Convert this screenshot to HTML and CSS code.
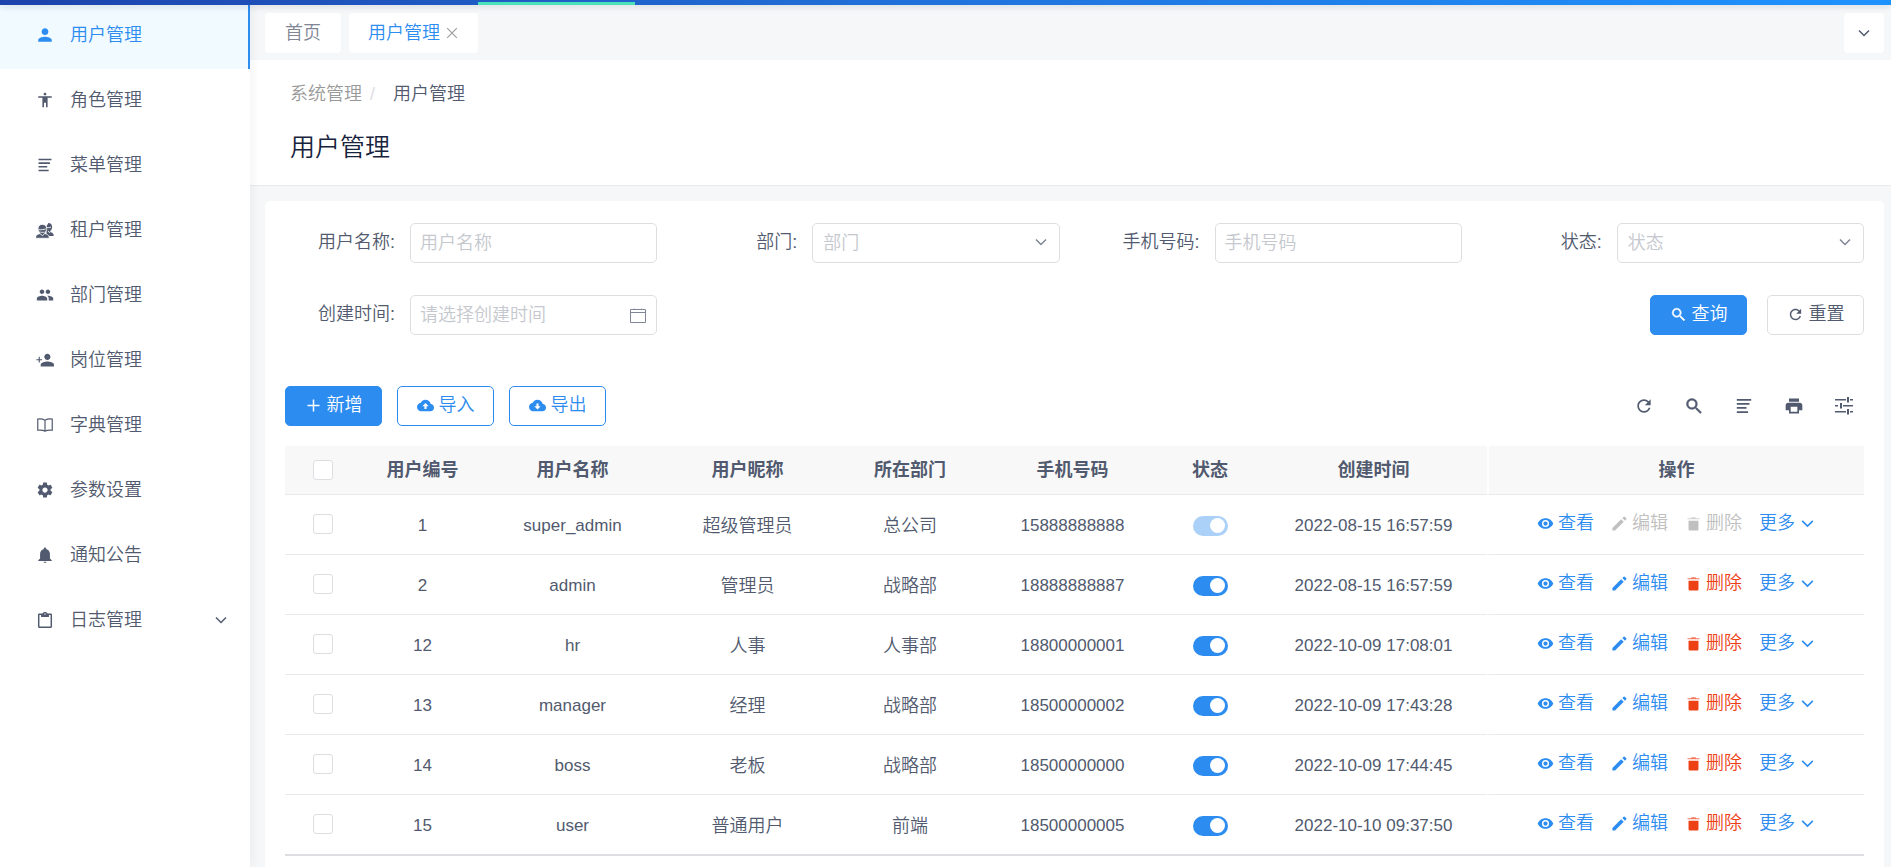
FILE: index.html
```html
<!DOCTYPE html>
<html lang="zh-CN">
<head>
<meta charset="utf-8">
<title>用户管理</title>
<link rel="stylesheet" href="styles.css">
</head>
<body>
<svg class="sprite" aria-hidden="true">
  <symbol id="i-person" viewBox="0 0 512 512"><path d="M256 256c52.800 0 96-43.200 96-96s-43.200-96-96-96-96 43.200-96 96 43.200 96 96 96zm0 48c-63.800 0-192 32.200-192 96v48h384v-48c0-63.800-128.200-96-192-96z"/></symbol>
  <symbol id="i-body" viewBox="0 0 512 512"><path d="M256 48c22 0 40 18 40 40s-18 40-40 40-40-18-40-40 18-40 40-40zm192 144H330v272h-46V336h-56v128h-46V192H64v-44h384z"/></symbol>
  <symbol id="i-lines" viewBox="0 0 512 512"><path d="M72 76h368v44H72zM72 180h324v44H72zM72 284h248v44H72zM72 388h288v44H72z"/></symbol>
  <symbol id="i-contacts" viewBox="0 0 24 24"><path d="M16.500 2.500c3 0 5 2 5 5 0 2.500-1 4.500-2.300 5.600v1.400c2 .800 4.300 1.800 4.300 4V20H14V7z"/><path fill="none" stroke="#fff" stroke-width="1.200" d="M13.500 8.500c1.500.600 4.500.600 6.500-.500M16 13l2 2.500 1.500-1.500"/><path stroke="#fff" stroke-width="1" d="M8.500 4.500c3.500 0 5.700 2.200 5.700 5.500 0 2.300-1 4.300-2.500 5.500v1.200c2.500.900 5.800 2 5.800 4.500v1.800h-18v-1.800c0-2.500 3.300-3.600 5.800-4.500v-1.200C3.800 14.300 2.800 12.300 2.800 10c0-3.300 2.200-5.500 5.700-5.500z"/><path fill="none" stroke="#fff" stroke-width="1.200" d="M4 11.500c3 .500 6 0 9-1M5.500 17l3 2.500 3-2.500M6 14.500c1.500 1 3.500 1 5 0"/></symbol>
  <symbol id="i-people" viewBox="0 0 512 512"><path d="M340 230c36 0 64-28 64-64s-28-64-64-64-64 28-64 64 28 64 64 64zm-170 0c36 0 64-28 64-64s-28-64-64-64-64 28-64 64 28 64 64 64zm0 44C118 274 24 300 24 354v58h294v-58c0-54-98-80-148-80zm176 0c-8 0-16 0-24 2 30 24 40 50 40 82v54h128v-58c0-54-96-80-144-80z"/></symbol>
  <symbol id="i-person-add" viewBox="0 0 512 512"><path d="M324 256c50 0 88-40 88-90s-38-90-88-90-88 40-88 90 38 90 88 90zm0 40c-64 0-190 32-190 94v48h378v-48c0-62-124-94-188-94zM108 232v-66H76v66H10v30h66v66h32v-66h66v-30z"/></symbol>
  <symbol id="i-book" viewBox="0 0 512 512"><path fill="none" stroke="currentColor" stroke-width="34" d="M256 120C200 86 120 78 50 88v318c70-10 150-6 206 24 56-30 136-34 206-24V88c-70-10-150-2-206 32zm0 0v310"/></symbol>
  <symbol id="i-gear" viewBox="0 0 24 24"><path d="M19.430 12.980c.040-.320.070-.640.070-.980s-.030-.660-.070-.980l2.110-1.650c.190-.150.240-.420.120-.640l-2-3.460c-.120-.220-.390-.300-.610-.220l-2.490 1c-.520-.400-1.080-.730-1.690-.980l-.380-2.650C14.460 2.180 14.250 2 14 2h-4c-.250 0-.460.180-.490.420l-.380 2.650c-.610.250-1.170.590-1.690.980l-2.490-1c-.230-.090-.490 0-.610.220l-2 3.460c-.130.220-.070.490.120.640l2.110 1.650c-.040.320-.070.650-.070.980s.030.660.070.980l-2.110 1.650c-.190.150-.240.420-.120.640l2 3.460c.120.220.390.300.610.220l2.490-1c.520.400 1.080.730 1.690.980l.380 2.650c.030.240.240.420.490.420h4c.250 0 .460-.180.490-.420l.380-2.650c.610-.250 1.170-.590 1.690-.980l2.490 1c.230.090.490 0 .610-.220l2-3.460c.120-.220.070-.490-.120-.640l-2.110-1.650zM12 15.500c-1.930 0-3.500-1.570-3.500-3.500s1.570-3.500 3.500-3.500 3.500 1.570 3.500 3.500-1.570 3.500-3.500 3.500z"/></symbol>
  <symbol id="i-bell" viewBox="0 0 512 512"><path d="M256 480c22 0 40-12 40-34h-80c0 22 18 34 40 34zm140-124V228c0-72-42-124-108-140V74c0-20-14-34-32-34s-32 14-32 34v14c-66 16-108 68-108 140v128l-52 48v22h384v-22z"/></symbol>
  <symbol id="i-clipboard" viewBox="0 0 512 512"><path fill-rule="evenodd" d="M420 72h-92c-8-26-36-46-72-46s-64 20-72 46H92c-22 0-36 16-36 38v334c0 22 14 38 36 38h328c22 0 36-16 36-38V110c0-22-14-38-36-38zm-6 368H98V114h46v54h224v-54h46zM256 66c12 0 20 8 20 20s-8 20-20 20-20-8-20-20 8-20 20-20z"/></symbol>
  <symbol id="i-down" viewBox="0 0 16 16"><path fill="none" stroke="currentColor" stroke-width="1.500" d="m3 5.500 5 5 5-5"/></symbol>
  <symbol id="i-close" viewBox="0 0 16 16"><path fill="none" stroke="currentColor" stroke-width="1.200" d="m2.500 2.500 11 11m0-11-11 11"/></symbol>
  <symbol id="i-calendar" viewBox="0 0 16 16"><path fill="none" stroke="currentColor" d="M.500 2.500h15v13H.500zM.500 5.500h15"/><path fill="none" stroke="currentColor" stroke-opacity="0.400" d="M4.500 1v2M11.500 1v2"/></symbol>
  <symbol id="i-search" viewBox="0 0 24 24"><path stroke="currentColor" stroke-width="0.600" d="M15.500 14h-.790l-.280-.270A6.471 6.471 0 0 0 16 9.500 6.500 6.500 0 1 0 9.500 16c1.610 0 3.090-.590 4.230-1.570l.270.280v.790l5.500 5.500L21 19.500l-5.500-5.500zm-6 0C7.010 14 5 11.990 5 9.500S7.010 5 9.500 5 14 7.010 14 9.500 11.990 14 9.500 14z"/></symbol>
  <symbol id="i-refresh" viewBox="0 0 24 24"><path d="M17.650 6.350C16.200 4.900 14.210 4 12 4c-4.420 0-7.990 3.580-7.990 8s3.570 8 7.990 8c3.730 0 6.840-2.550 7.730-6h-2.080c-.820 2.330-3.040 4-5.650 4-3.310 0-6-2.690-6-6s2.690-6 6-6c1.660 0 3.140.690 4.220 1.780L13 11h7V4l-2.350 2.350z"/></symbol>
  <symbol id="i-add" viewBox="0 0 17 17"><path fill="none" stroke="currentColor" stroke-width="1.500" d="M8.500 2.500v12M2.500 8.500h12"/></symbol>
  <symbol id="i-cloud-up" viewBox="0 0 24 24"><path d="M19.350 10.040C18.670 6.590 15.640 4 12 4 9.110 4 6.600 5.640 5.350 8.040 2.340 8.360 0 10.910 0 14c0 3.310 2.690 6 6 6h13c2.760 0 5-2.240 5-5 0-2.640-2.050-4.780-4.650-4.960zM13.500 13v4h-3v-4H7.500l4.500-4.500 4.500 4.500h-3z"/></symbol>
  <symbol id="i-cloud-down" viewBox="0 0 24 24"><path d="M19.350 10.040C18.670 6.590 15.640 4 12 4 9.110 4 6.600 5.640 5.350 8.040 2.340 8.360 0 10.910 0 14c0 3.310 2.690 6 6 6h13c2.760 0 5-2.240 5-5 0-2.640-2.050-4.780-4.650-4.960zM16.500 13 12 17.500 7.500 13h3V9h3v4h3z"/></symbol>
  <symbol id="i-print" viewBox="0 0 24 24"><path d="M19 8H5c-1.660 0-3 1.340-3 3v6h4v4h12v-4h4v-6c0-1.660-1.340-3-3-3zm-3 11H8v-6h8v6zM18 3H6v4h12V3z"/></symbol>
  <symbol id="i-options" viewBox="0 0 20 20"><path d="M1 3h11v1.500H1zM16 3h3v1.500h-3zM13 1h2v5.500h-2zM1 9h3v1.500H1zM9 9h10v1.500H9zM6 7h2v5.500H6zM1 15h11v1.500H1zM16 15h3v1.500h-3zM13 13h2v5.500h-2z"/></symbol>
  <symbol id="i-eye" viewBox="0 0 24 24"><path d="M12 4.500C7 4.500 2.730 7.610 1 12c1.730 4.390 6 7.500 11 7.500s9.270-3.110 11-7.500c-1.730-4.390-6-7.500-11-7.500zm0 12.500a5 5 0 1 1 0-10 5 5 0 0 1 0 10zm0-8a3 3 0 1 0 0 6 3 3 0 0 0 0-6z"/></symbol>
  <symbol id="i-edit" viewBox="0 0 24 24"><path d="M2 18.300V22h3.700L18 9.700 14.300 6 2 18.300zM21.600 6.100a1 1 0 0 0 0-1.400l-2.300-2.300a1 1 0 0 0-1.400 0L16 4.300 19.700 8l1.900-1.900z"/></symbol>
  <symbol id="i-trash" viewBox="0 0 24 24"><path d="M5 8v12c0 1.100.900 2 2 2h10c1.100 0 2-.900 2-2V8z"/><path fill-opacity="0.700" d="M20.500 4.500H16L14.500 3h-5L8 4.500H3.500V6h17z"/></symbol>
</svg>

<div class="app">
  <div class="topbar"><span class="topbar-active"></span></div>
  <div class="layout">
    <nav class="sidebar" aria-label="系统管理">
      <a class="menu-item menu-item-active" href="#user"><svg class="icon"><use href="#i-person"/></svg><span>用户管理</span></a>
      <a class="menu-item" href="#role"><svg class="icon"><use href="#i-body"/></svg><span>角色管理</span></a>
      <a class="menu-item" href="#menu"><svg class="icon"><use href="#i-lines"/></svg><span>菜单管理</span></a>
      <a class="menu-item" href="#tenant"><svg class="icon"><use href="#i-contacts"/></svg><span>租户管理</span></a>
      <a class="menu-item" href="#dept"><svg class="icon"><use href="#i-people"/></svg><span>部门管理</span></a>
      <a class="menu-item" href="#post"><svg class="icon"><use href="#i-person-add"/></svg><span>岗位管理</span></a>
      <a class="menu-item" href="#dict"><svg class="icon"><use href="#i-book"/></svg><span>字典管理</span></a>
      <a class="menu-item" href="#config"><svg class="icon"><use href="#i-gear"/></svg><span>参数设置</span></a>
      <a class="menu-item" href="#notice"><svg class="icon"><use href="#i-bell"/></svg><span>通知公告</span></a>
      <a class="menu-item" href="#log"><svg class="icon"><use href="#i-clipboard"/></svg><span>日志管理</span><svg class="icon menu-arrow"><use href="#i-down"/></svg></a>
    </nav>

    <div class="page">
      <div class="tabs">
        <a class="tab" href="#home">首页</a>
        <div class="tab tab-active"><a href="#user">用户管理</a><button class="tab-close" type="button" aria-label="关闭"><svg class="icon"><use href="#i-close"/></svg></button></div>
        <button class="tabs-more" type="button" aria-label="更多标签"><svg class="icon"><use href="#i-down"/></svg></button>
      </div>

      <header class="page-head">
        <div class="crumbs"><a href="#system">系统管理</a><span class="crumb-sep">/</span><span>用户管理</span></div>
        <h1 class="page-title">用户管理</h1>
      </header>

      <main class="card">
        <form class="filters">
          <div class="field"><label for="f-name">用户名称:</label><input class="control" id="f-name" type="text" placeholder="用户名称"></div>
          <div class="field"><label for="f-dept">部门:</label><div class="control-box"><select class="control" id="f-dept"><option>部门</option></select><svg class="icon control-arrow"><use href="#i-down"/></svg></div></div>
          <div class="field"><label for="f-phone">手机号码:</label><input class="control" id="f-phone" type="text" placeholder="手机号码"></div>
          <div class="field"><label for="f-state">状态:</label><div class="control-box"><select class="control" id="f-state"><option>状态</option></select><svg class="icon control-arrow"><use href="#i-down"/></svg></div></div>
          <div class="field"><label for="f-time">创建时间:</label><div class="control-box"><input class="control" id="f-time" type="text" placeholder="请选择创建时间"><svg class="icon control-date"><use href="#i-calendar"/></svg></div></div>
          <div class="filter-actions">
            <button class="btn btn-primary" type="button"><svg class="icon"><use href="#i-search"/></svg>查询</button>
            <button class="btn" type="reset"><svg class="icon"><use href="#i-refresh"/></svg>重置</button>
          </div>
        </form>

        <div class="toolbar">
          <button class="btn btn-primary" type="button"><svg class="icon"><use href="#i-add"/></svg>新增</button>
          <button class="btn btn-outline" type="button"><svg class="icon"><use href="#i-cloud-up"/></svg>导入</button>
          <button class="btn btn-outline" type="button"><svg class="icon"><use href="#i-cloud-down"/></svg>导出</button>
          <div class="tools">
            <button class="tool" type="button" aria-label="刷新"><svg class="icon"><use href="#i-refresh"/></svg></button>
            <button class="tool" type="button" aria-label="搜索"><svg class="icon"><use href="#i-search"/></svg></button>
            <button class="tool" type="button" aria-label="密度"><svg class="icon"><use href="#i-lines"/></svg></button>
            <button class="tool" type="button" aria-label="打印"><svg class="icon"><use href="#i-print"/></svg></button>
            <button class="tool" type="button" aria-label="列设置"><svg class="icon"><use href="#i-options"/></svg></button>
          </div>
        </div>

        <table class="grid">
          <colgroup><col class="w-check"><col class="w-id"><col class="w-text"><col class="w-text"><col class="w-dept"><col class="w-text"><col class="w-state"><col><col class="w-ops"></colgroup>
          <thead>
            <tr><th><input class="check" type="checkbox" aria-label="全选"></th><th>用户编号</th><th>用户名称</th><th>用户昵称</th><th>所在部门</th><th>手机号码</th><th>状态</th><th>创建时间</th><th class="ops-col">操作</th></tr>
          </thead>
          <tbody>
            <tr>
              <td><input class="check" type="checkbox" aria-label="选择 super_admin"></td><td class="latin">1</td><td class="latin">super_admin</td><td>超级管理员</td><td>总公司</td><td class="latin">15888888888</td>
              <td><input class="switch" type="checkbox" role="switch" aria-label="状态" checked disabled></td><td class="latin">2022-08-15 16:57:59</td>
              <td class="ops-col"><div class="ops"><a class="op" href="#view"><svg class="icon"><use href="#i-eye"/></svg>查看</a><a class="op op-disabled" href="#edit" aria-disabled="true"><svg class="icon"><use href="#i-edit"/></svg>编辑</a><a class="op op-disabled" href="#del" aria-disabled="true"><svg class="icon"><use href="#i-trash"/></svg>删除</a><a class="op" href="#more">更多<svg class="icon"><use href="#i-down"/></svg></a></div></td>
            </tr>
            <tr>
              <td><input class="check" type="checkbox" aria-label="选择 admin"></td><td class="latin">2</td><td class="latin">admin</td><td>管理员</td><td>战略部</td><td class="latin">18888888887</td>
              <td><input class="switch" type="checkbox" role="switch" aria-label="状态" checked></td><td class="latin">2022-08-15 16:57:59</td>
              <td class="ops-col"><div class="ops"><a class="op" href="#view"><svg class="icon"><use href="#i-eye"/></svg>查看</a><a class="op" href="#edit"><svg class="icon"><use href="#i-edit"/></svg>编辑</a><a class="op op-danger" href="#del"><svg class="icon"><use href="#i-trash"/></svg>删除</a><a class="op" href="#more">更多<svg class="icon"><use href="#i-down"/></svg></a></div></td>
            </tr>
            <tr>
              <td><input class="check" type="checkbox" aria-label="选择 hr"></td><td class="latin">12</td><td class="latin">hr</td><td>人事</td><td>人事部</td><td class="latin">18800000001</td>
              <td><input class="switch" type="checkbox" role="switch" aria-label="状态" checked></td><td class="latin">2022-10-09 17:08:01</td>
              <td class="ops-col"><div class="ops"><a class="op" href="#view"><svg class="icon"><use href="#i-eye"/></svg>查看</a><a class="op" href="#edit"><svg class="icon"><use href="#i-edit"/></svg>编辑</a><a class="op op-danger" href="#del"><svg class="icon"><use href="#i-trash"/></svg>删除</a><a class="op" href="#more">更多<svg class="icon"><use href="#i-down"/></svg></a></div></td>
            </tr>
            <tr>
              <td><input class="check" type="checkbox" aria-label="选择 manager"></td><td class="latin">13</td><td class="latin">manager</td><td>经理</td><td>战略部</td><td class="latin">18500000002</td>
              <td><input class="switch" type="checkbox" role="switch" aria-label="状态" checked></td><td class="latin">2022-10-09 17:43:28</td>
              <td class="ops-col"><div class="ops"><a class="op" href="#view"><svg class="icon"><use href="#i-eye"/></svg>查看</a><a class="op" href="#edit"><svg class="icon"><use href="#i-edit"/></svg>编辑</a><a class="op op-danger" href="#del"><svg class="icon"><use href="#i-trash"/></svg>删除</a><a class="op" href="#more">更多<svg class="icon"><use href="#i-down"/></svg></a></div></td>
            </tr>
            <tr>
              <td><input class="check" type="checkbox" aria-label="选择 boss"></td><td class="latin">14</td><td class="latin">boss</td><td>老板</td><td>战略部</td><td class="latin">18500000000</td>
              <td><input class="switch" type="checkbox" role="switch" aria-label="状态" checked></td><td class="latin">2022-10-09 17:44:45</td>
              <td class="ops-col"><div class="ops"><a class="op" href="#view"><svg class="icon"><use href="#i-eye"/></svg>查看</a><a class="op" href="#edit"><svg class="icon"><use href="#i-edit"/></svg>编辑</a><a class="op op-danger" href="#del"><svg class="icon"><use href="#i-trash"/></svg>删除</a><a class="op" href="#more">更多<svg class="icon"><use href="#i-down"/></svg></a></div></td>
            </tr>
            <tr>
              <td><input class="check" type="checkbox" aria-label="选择 user"></td><td class="latin">15</td><td class="latin">user</td><td>普通用户</td><td>前端</td><td class="latin">18500000005</td>
              <td><input class="switch" type="checkbox" role="switch" aria-label="状态" checked></td><td class="latin">2022-10-10 09:37:50</td>
              <td class="ops-col"><div class="ops"><a class="op" href="#view"><svg class="icon"><use href="#i-eye"/></svg>查看</a><a class="op" href="#edit"><svg class="icon"><use href="#i-edit"/></svg>编辑</a><a class="op op-danger" href="#del"><svg class="icon"><use href="#i-trash"/></svg>删除</a><a class="op" href="#more">更多<svg class="icon"><use href="#i-down"/></svg></a></div></td>
            </tr>
          </tbody>
        </table>
      </main>
    </div>
  </div>
</div>
</body>
</html>
```
FILE: styles.css
```css
:root {
  --primary: #2d8cf0;
  --text: #515a6e;
  --muted: #c5c8ce;
  --border: #dcdee2;
  --line: #e8eaec;
  --danger: #ed4014;
}

* { box-sizing: border-box; }

body {
  margin: 0;
  background: #f5f7f9;
  color: var(--text);
  font: 350 18px/24px "Liberation Sans", "Noto Sans CJK SC", sans-serif;
}

a { color: inherit; text-decoration: none; }
button, input, select { font: inherit; color: inherit; }
button { cursor: pointer; }

.sprite { display: none; }
.icon { width: 16px; height: 16px; fill: currentColor; flex: none; }

.app { display: flex; flex-direction: column; min-height: 100vh; }

.topbar {
  position: relative;
  z-index: 3;
  height: 5px;
  margin-bottom: -1px;
  background: linear-gradient(90deg, #1d42ab, #2173dc 50%, #1e93ff);
  box-shadow: 0 2px 6px rgba(0, 21, 41, 0.12);
}
.topbar-active {
  position: absolute;
  left: 478px;
  bottom: 0;
  width: 157px;
  height: 3px;
  background: #4be1b9;
}

.layout { display: flex; flex: 1; }

.sidebar {
  position: relative;
  z-index: 2;
  flex: none;
  width: 250px;
  background: #fff;
  box-shadow: 2px 0 10px rgba(29, 35, 41, 0.05);
}
.menu-item {
  display: flex;
  align-items: center;
  gap: 16px;
  height: 65px;
  padding: 0 21px 4px 36px;
}
.menu-item .icon { width: 18px; height: 18px; }
.menu-item-active {
  color: var(--primary);
  background: #f0faff;
  border-right: 2px solid var(--primary);
}
.menu-item .menu-arrow { width: 16px; height: 16px; margin-left: auto; }

.page { display: flex; flex-direction: column; flex: 1; min-width: 0; }

.tabs {
  display: flex;
  align-items: center;
  gap: 8px;
  height: 56px;
  padding: 2px 7px 0 15px;
}
.tab {
  display: flex;
  align-items: center;
  height: 40px;
  padding: 0 20px;
  border-radius: 4px;
  background: #fff;
  color: #808695;
}
.tab-active { gap: 5px; padding: 0 19px; color: var(--primary); }
.tab-close { display: flex; padding: 0; border: 0; background: none; color: #999; }
.tab-close .icon { width: 14px; height: 14px; }
.tabs-more {
  display: flex;
  align-items: center;
  justify-content: center;
  width: 40px;
  height: 40px;
  margin-left: auto;
  padding: 0;
  border: 0;
  border-radius: 4px;
  background: #fff;
}

.page-head {
  padding: 22px 40px 20px;
  background: #fff;
  border-bottom: 1px solid var(--line);
}
.crumbs { display: flex; align-items: center; }
.crumbs a { color: #999; }
.crumb-sep { margin: 0 18px 0 8px; color: var(--border); }
.page-title {
  margin: 24px 0 0;
  color: #17233d;
  font-size: 25px;
  font-weight: 350;
  line-height: 35px;
}

.card {
  flex: 1;
  margin: 15px 7px 0 15px;
  padding: 22px 20px 12px;
  border-radius: 5px 5px 0 0;
  background: #fff;
}

.filters {
  display: grid;
  grid-template-columns: repeat(4, minmax(0, 1fr));
  gap: 32px 30px;
}
.field { display: flex; align-items: center; }
.field label { flex: none; width: 125px; padding: 0 15px 2px 0; text-align: right; }
.control-box { position: relative; flex: 1; min-width: 0; }
.control {
  flex: 1;
  width: 100%;
  min-width: 0;
  height: 40px;
  padding: 0 9px;
  border: 1px solid var(--border);
  border-radius: 5px;
  background: #fff;
  appearance: none;
}
select.control { padding: 0 10px; color: var(--muted); }
.control::placeholder { color: var(--muted); opacity: 1; }
.control-arrow { position: absolute; top: 11px; right: 11px; color: #808695; }
.control-date { position: absolute; top: 12px; right: 11px; color: #808695; }
.filter-actions {
  grid-column: 2 / -1;
  display: flex;
  justify-content: flex-end;
  gap: 20px;
}

.btn {
  display: flex;
  align-items: center;
  justify-content: center;
  gap: 5px;
  width: 97px;
  height: 40px;
  padding: 0 0 2px;
  border: 1px solid var(--border);
  border-radius: 5px;
  background: #fff;
}
.btn .icon { width: 17px; height: 17px; }
.btn-primary { border-color: var(--primary); background: var(--primary); color: #fff; }
.btn-outline { border-color: var(--primary); color: var(--primary); }

.toolbar { display: flex; align-items: center; gap: 15px; margin: 51px 0 20px; }
.tools { display: flex; gap: 30px; margin-left: auto; padding-right: 10px; }
.tool { display: flex; padding: 0; border: 0; background: none; }
.tool .icon { width: 20px; height: 20px; }

.grid { width: 100%; table-layout: fixed; border-collapse: separate; border-spacing: 0; border-bottom: 2px solid var(--border); }
.w-check { width: 75px; }
.w-id { width: 125px; }
.w-text { width: 175px; }
.w-dept { width: 150px; }
.w-state { width: 100px; }
.w-ops { width: 377px; }
.grid th, .grid td { padding: 0; text-align: center; border-bottom: 1px solid var(--line); }
.grid th { height: 49px; background: #f8f8f9; font-weight: 700; }
.grid td { height: 60px; padding-top: 2px; }
.grid td:first-child { padding: 0 0 2px; }
.grid tbody tr:last-child td { height: 59px; border-bottom: 0; }
.grid .latin { font-size: 17px; }
.grid .ops-col { padding-top: 0; border-left: 2px solid #fff; }

.check {
  display: block;
  width: 20px;
  height: 20px;
  margin: 0 auto;
  border: 1px solid var(--border);
  border-radius: 3px;
  background: #fff;
  appearance: none;
}
.switch {
  display: flex;
  align-items: center;
  justify-content: flex-end;
  width: 35px;
  height: 20px;
  margin: 0 auto;
  padding: 0 3px;
  border-radius: 10px;
  background: var(--primary);
  appearance: none;
}
.switch::before { content: ""; width: 15px; height: 15px; border-radius: 50%; background: #fff; }
.switch:disabled { background: #abd1f9; }

.ops { display: flex; justify-content: center; gap: 17px; padding-bottom: 3px; }
.op { display: flex; align-items: center; gap: 4px; color: var(--primary); }
.op .icon { width: 17px; height: 17px; }
.op-danger { color: var(--danger); }
.op-disabled { color: #c0c0c0; }
```
